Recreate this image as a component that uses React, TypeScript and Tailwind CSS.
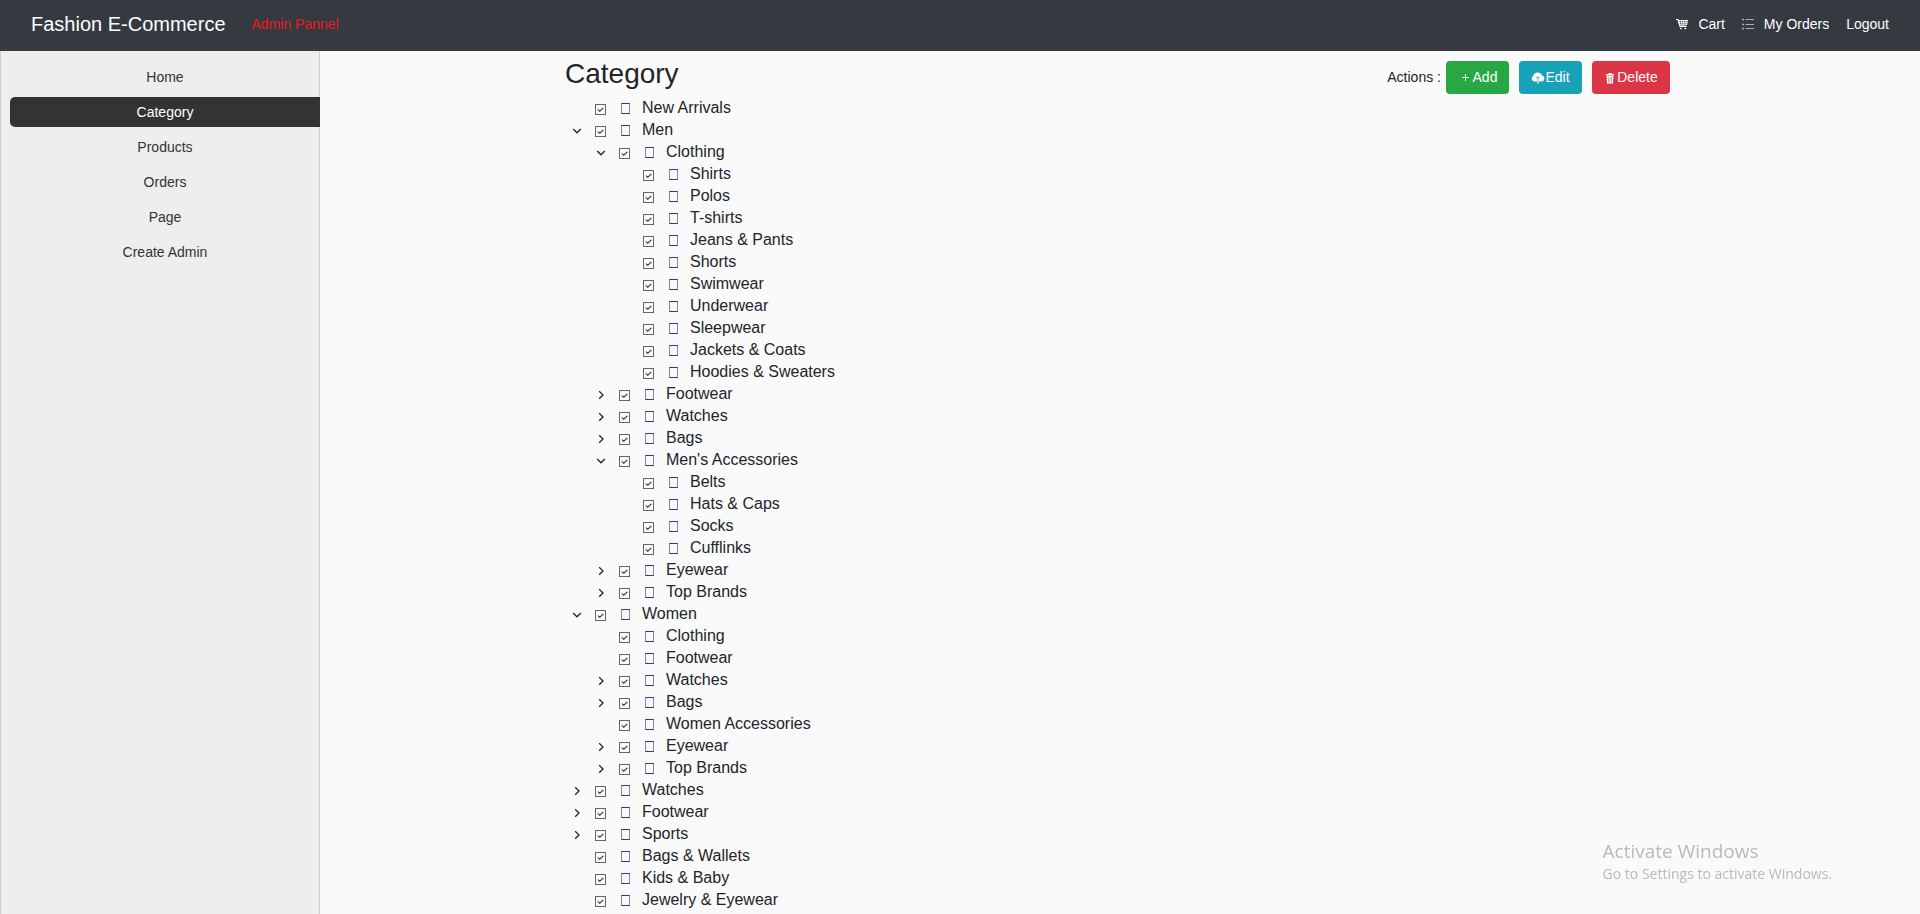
import { useState } from "react";

type Category = { name: string; open?: boolean; children?: Category[] };

const leaf = (name: string): Category => ({ name });
const closed = (name: string): Category => ({ name, open: false, children: [] });
const opened = (name: string, children: Category[]): Category => ({ name, open: true, children });

const categories: Category[] = [
  leaf("New Arrivals"),
  opened("Men", [
    opened(
      "Clothing",
      ["Shirts", "Polos", "T-shirts", "Jeans & Pants", "Shorts", "Swimwear", "Underwear", "Sleepwear", "Jackets & Coats", "Hoodies & Sweaters"].map(leaf),
    ),
    closed("Footwear"),
    closed("Watches"),
    closed("Bags"),
    opened("Men's Accessories", ["Belts", "Hats & Caps", "Socks", "Cufflinks"].map(leaf)),
    closed("Eyewear"),
    closed("Top Brands"),
  ]),
  opened("Women", [
    leaf("Clothing"),
    leaf("Footwear"),
    closed("Watches"),
    closed("Bags"),
    leaf("Women Accessories"),
    closed("Eyewear"),
    closed("Top Brands"),
  ]),
  closed("Watches"),
  closed("Footwear"),
  closed("Sports"),
  leaf("Bags & Wallets"),
  leaf("Kids & Baby"),
  leaf("Jewelry & Eyewear"),
];

const navItems = ["Home", "Category", "Products", "Orders", "Page", "Create Admin"];

function Chevron({ open }: { open: boolean }) {
  return (
    <svg viewBox="0 0 10 10" className="size-2.5" fill="none" stroke="#212529" strokeWidth="1.3">
      {open ? <path d="M1.2 3 5 6.8 8.8 3" /> : <path d="M3.2 1.2 7 5 3.2 8.8" />}
    </svg>
  );
}

function TreeNode({ node, path }: { node: Category; path: string }) {
  const [open, setOpen] = useState(!!node.open);
  const [checked, setChecked] = useState(true);
  return (
    <li>
      <div className="flex h-[22px] items-center">
        {node.children ? (
          <button
            type="button"
            aria-label={`Toggle ${node.name}`}
            aria-expanded={open}
            onClick={() => setOpen(!open)}
            className="flex w-6 justify-center pt-0.5"
          >
            <Chevron open={open} />
          </button>
        ) : (
          <span className="w-6" />
        )}
        <label htmlFor={path} className="flex items-center">
          <span className="grid w-6 justify-center pt-0.5">
            <input
              id={path}
              type="checkbox"
              checked={checked}
              onChange={() => setChecked(!checked)}
              className="col-start-1 row-start-1 size-[11px] appearance-none border border-[#666]"
            />
            {checked && (
              <svg viewBox="0 0 11 11" className="pointer-events-none col-start-1 row-start-1 size-[11px]" fill="none" stroke="#333" strokeWidth="1.2">
                <path d="M2.8 5.6 4.8 7.3 8.3 3.8" />
              </svg>
            )}
          </span>
          <span className="flex w-6 justify-center pl-px">
            <span className="h-[11px] w-[9px] border border-x-[#8484bd] border-y-[#33337f]" />
          </span>
          <span className="pl-[5px] text-[16px] leading-[22px]">{node.name}</span>
        </label>
      </div>
      {open && node.children && node.children.length > 0 && (
        <ol className="pl-6">
          {node.children.map((child) => (
            <TreeNode key={child.name} node={child} path={`${path}-${child.name}`} />
          ))}
        </ol>
      )}
    </li>
  );
}

function CartIcon() {
  return (
    <svg viewBox="0 0 12 12" className="size-3" fill="none" stroke="#fff">
      <path d="M0 1.5h2l2 7h6.5" strokeWidth="1.1" />
      <path d="M2.5 2.5h9l-1 4.5H4z" strokeWidth="1" />
      <path d="M3 4.7h8M5.3 2.5l.5 4.5M7.3 2.5V7M9.4 2.5 9 7" strokeWidth=".8" />
      <path d="M4 10.5h1.6M8.5 10.5h1.6" strokeWidth="1.6" />
    </svg>
  );
}

function ListIcon() {
  return (
    <svg viewBox="0 0 12 12" className="size-3" fill="none" stroke="#a9adb1" strokeWidth="1">
      <path d="M0 1.5h2M0 6.5h2M0 10.5h2" strokeWidth="1.6" />
      <path d="M3.5 1.5H12M3.5 6.5H12M3.5 10.5H12" />
    </svg>
  );
}

function CloudIcon() {
  return (
    <svg viewBox="0 0 14 12" className="h-3 w-3.5">
      <path fill="#fff" d="M3 9.5A3 3 0 0 1 2.2 4 4.6 4.6 0 0 1 11 3.6 3 3 0 0 1 11 9.5Z" />
      <path stroke="#17a2b8" strokeWidth=".9" fill="none" d="M5.3 6.2 7 4.5l1.7 1.7" />
      <path stroke="#17a2b8" strokeWidth=".7" d="M7 5v4.5" />
      <path stroke="#fff" d="M7 9v3" />
    </svg>
  );
}

function TrashIcon() {
  return (
    <svg viewBox="0 0 8 12" className="h-3 w-2">
      <path fill="#fff" d="M0 2h2.5V1h3v1H8v1.5H0zM.6 4h6.8L7 11.5H1z" />
      <path stroke="#dc3545" strokeWidth=".5" d="M2.6 5v5.5M4 5v5.5M5.4 5v5.5" />
    </svg>
  );
}

export default function App() {
  return (
    <div className="flex h-screen flex-col overflow-hidden bg-[#fafafa] font-['Liberation_Sans',Arial,sans-serif] text-[14px] text-[#212529]">
      <header className="flex h-[51px] shrink-0 items-center bg-[#343a40] pr-[31px] pb-[3px] pl-[31px] text-white">
        <a href="#" className="text-[20px] leading-[30px]">Fashion E-Commerce</a>
        <span className="ml-[26px] text-[#f3151c]">Admin Pannel</span>
        <nav className="ml-auto flex items-center gap-[17px]">
          <a href="#cart" className="flex items-center gap-2.5">
            <CartIcon />
            Cart
          </a>
          <a href="#my-orders" className="flex items-center gap-2.5">
            <ListIcon />
            My Orders
          </a>
          <a href="#logout">Logout</a>
        </nav>
      </header>

      <div className="flex min-h-0 flex-1">
        <aside className="w-1/6 shrink-0 border-l border-[#ccc] bg-[#eee]">
          <ul className="flex h-full flex-col gap-[5px] border-r border-[#ccc] pt-[11px] text-center text-[#333]">
            {navItems.map((item) => (
              <li key={item} className="-mr-px pl-[9px]">
                <a
                  href={`#${item}`}
                  className={
                    item === "Category"
                      ? "block rounded-l-[5px] bg-[#333] leading-[30px] text-white"
                      : "block leading-[30px]"
                  }
                >
                  {item}
                </a>
              </li>
            ))}
          </ul>
        </aside>

        <main className="min-w-0 flex-1">
          <div className="mx-auto max-w-[1140px] px-[15px] pt-[5px]">
            <div className="flex items-start justify-between">
              <h1 className="pt-px text-[28px] leading-[34px]">Category</h1>
              <div className="flex items-center gap-2.5 pt-[5px] pr-[5px]">
                <div className="flex items-center gap-[5px]">
                  <span>Actions :</span>
                  <button type="button" className="flex h-[33px] w-[63px] items-center justify-center gap-1 rounded bg-[#28a745] pl-1 text-white">
                    <svg viewBox="0 0 7 7" className="size-[7px]" stroke="#fff" strokeWidth="1">
                      <path d="M0 3.5h7M3.5 0v7" />
                    </svg>
                    Add
                  </button>
                </div>
                <button type="button" className="flex h-[33px] w-[63px] items-center justify-center rounded bg-[#17a2b8] text-white">
                  <CloudIcon />
                  Edit
                </button>
                <button type="button" className="flex h-[33px] w-[78px] items-center justify-center gap-[3px] rounded bg-[#dc3545] pl-0.5 text-white">
                  <TrashIcon />
                  Delete
                </button>
              </div>
            </div>
            <ol className="pt-[3px]">
              {categories.map((c) => (
                <TreeNode key={c.name} node={c} path={c.name} />
              ))}
            </ol>
          </div>
        </main>
      </div>

      <div className="pointer-events-none fixed right-[88px] bottom-[30px] font-['Open_Sans',sans-serif] text-[#b9b9b9]">
        <p className="text-[19px] leading-[26px]">Activate Windows</p>
        <p className="text-[14px] leading-5">Go to Settings to activate Windows.</p>
      </div>
    </div>
  );
}
